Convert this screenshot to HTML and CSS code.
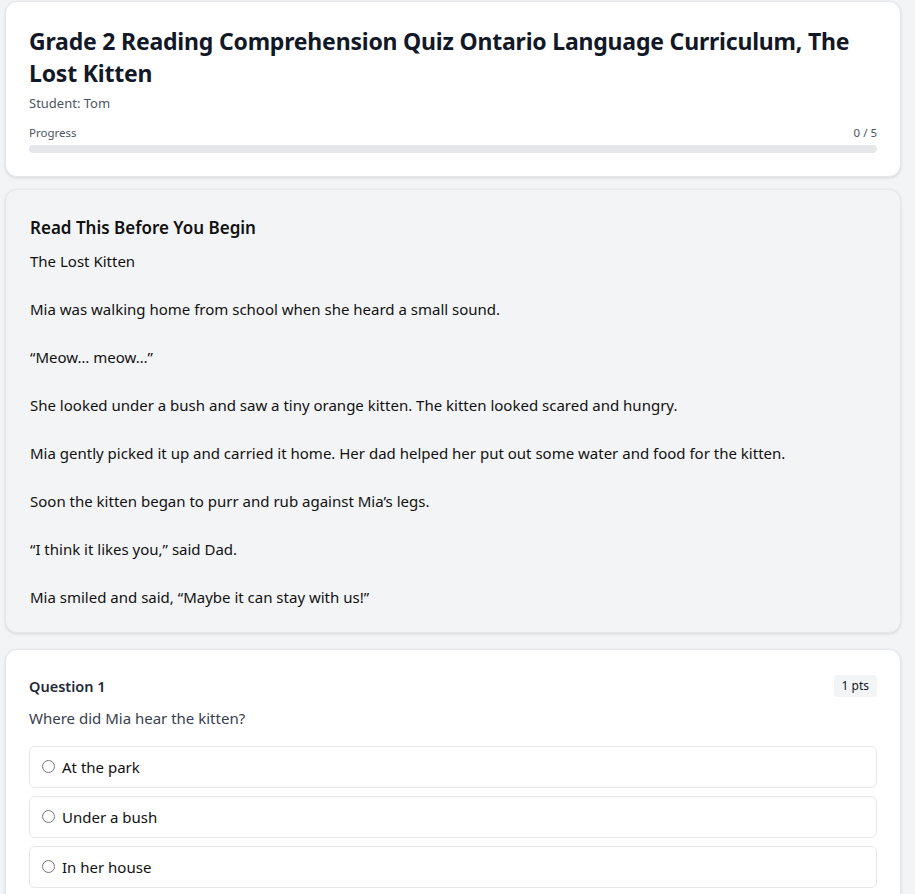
FILE: index.html
```html
<!DOCTYPE html>
<html>
<head>
<meta charset="utf-8">
<title>The Lost Kitten Quiz</title>
<link rel="stylesheet" href="styles.css">
</head>
<body>
<div class="page">

<div class="card header">
<h1>Grade 2 Reading Comprehension Quiz Ontario Language Curriculum, The Lost Kitten</h1>
<div class="student">Student: Tom</div>
<div class="progress-row"><span>Progress</span><span>0 / 5</span></div>
<div class="bar"><div class="fill" style="width: 0%"></div></div>
</div>

<div class="card passage">
<h2>Read This Before You Begin</h2>
<p>The Lost Kitten</p>
<p>Mia was walking home from school when she heard a small sound.</p>
<p>“Meow… meow…”</p>
<p>She looked under a bush and saw a tiny orange kitten. The kitten looked scared and hungry.</p>
<p>Mia gently picked it up and carried it home. Her dad helped her put out some water and food for the kitten.</p>
<p>Soon the kitten began to purr and rub against Mia’s legs.</p>
<p>“I think it likes you,” said Dad.</p>
<p>Mia smiled and said, “Maybe it can stay with us!”</p>
</div>

<div class="card question">
<div class="q-head"><span class="q-num">Question 1</span><span class="pts">1 pts</span></div>
<div class="q-text">Where did Mia hear the kitten?</div>
<label class="option"><input type="radio" name="q1">At the park</label>
<label class="option"><input type="radio" name="q1">Under a bush</label>
<label class="option"><input type="radio" name="q1">In her house</label>
<label class="option"><input type="radio" name="q1">At school</label>
</div>

</div>
</body>
</html>
```
FILE: styles.css
```css
body{
margin:0; background-color:#f3f4f6; color:#111827; font-family:"Noto Sans", "Open Sans", sans-serif;
}
.page{
width:896px; padding:1px 0 20px 5px; display:flex; flex-direction:column; gap:12px;
}
.card{
background-color:#fff; border:1px solid #e5e7eb; border-radius:12px; box-shadow:0 1px 3px rgba(0,0,0,0.12); padding:23px;
}
.header h1{
margin:0; font-size:23px; line-height:32px; font-weight:700; letter-spacing:-0.2px; color:#111827;
}
.student{
font-size:13px; line-height:20px; color:#4b5563; margin-top:4px;
}
.progress-row{
display:flex; justify-content:space-between; font-size:11.5px; line-height:16px; color:#4b5563; margin-top:12px;
}
.bar{
height:8px; background-color:#e5e7eb; border-radius:4px; margin-top:4px; overflow:hidden;
}
.fill{
height:100%; background-color:#2563eb;
}
.passage{
background-color:#f3f4f6; padding:25px 23px 23px 24px;
}
.passage h2{
margin:0 0 8px; font-size:17px; line-height:26px; font-weight:600; color:#111;
}
.passage p{
margin:0 0 24px; font-size:15px; line-height:24px; color:#111;
}
.passage p:last-child{
margin-bottom:0;
}
.question{
margin-top:4px;
}
.q-head{
display:flex; justify-content:space-between; align-items:center; padding-top:2px;
}
.q-num{
font-size:14.5px; font-weight:600; color:#1f2937;
}
.pts{
background-color:#f3f4f6; border-radius:4px; font-size:12px; line-height:22px; padding:0 8px;
}
.q-text{
margin-top:9px; margin-bottom:16px; font-size:15px; line-height:24px; color:#374151;
}
.option{
display:flex; align-items:center; gap:7px; border:1px solid #e5e7eb; border-radius:6px; padding:8px 12px; margin-bottom:8px; font-size:15px; line-height:24px; color:#111;
}
.option input{
margin:0 0 2px; width:13px; height:13px;
}
```
